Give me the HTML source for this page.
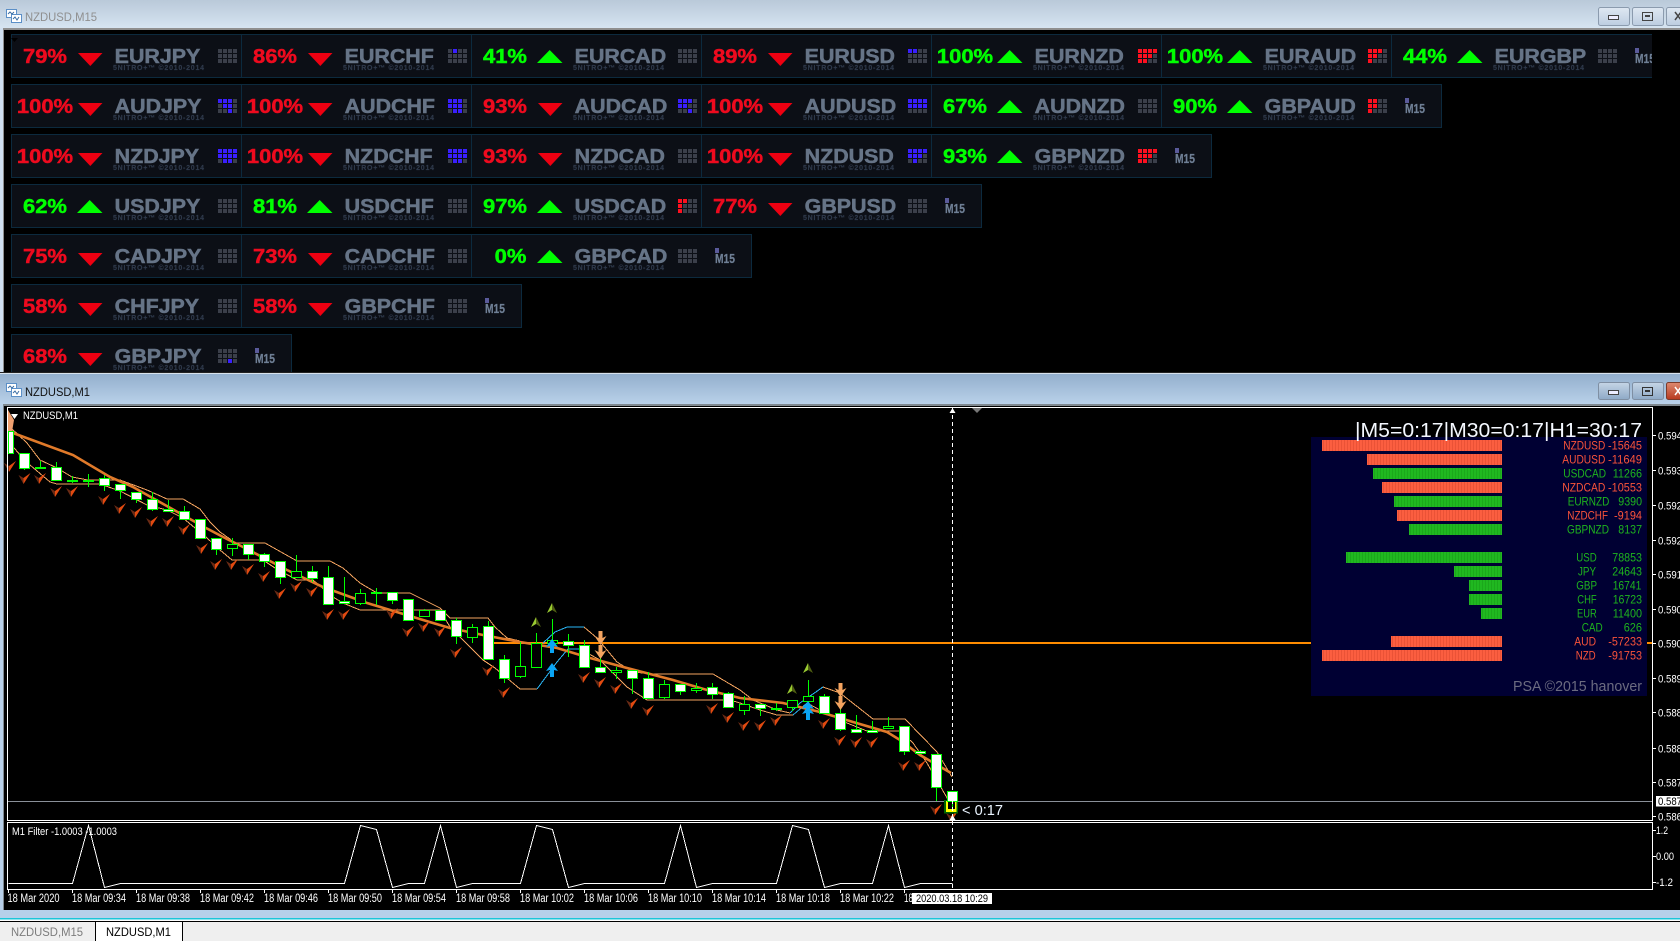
<!DOCTYPE html>
<html><head><meta charset="utf-8"><title>NZDUSD</title>
<style>
html,body{margin:0;padding:0;background:#000;overflow:hidden}
svg{display:block;font-family:"Liberation Sans",sans-serif}
.pc{font-weight:bold;font-size:20px;text-anchor:middle;transform:scale(1.1,1);stroke-width:.45px}
.re{fill:#ee0a1e;stroke:#ee0a1e}.gr{fill:#00ff00;stroke:#00ff00}
.pr{font-weight:bold;font-size:20px;fill:#667487;stroke:#667487;stroke-width:.5px;transform:scale(1.07,1)}
.cp{font-weight:bold;font-size:7px;fill:#2f3a4c;stroke:#2f3a4c;stroke-width:.15px}
.m15{font-weight:bold;font-size:13px;fill:#6f7f95;stroke:#6f7f95;stroke-width:.25px}
.tx{font-size:11.5px;fill:#fff}
.pl{font-size:12px}
.pR{fill:#f9533a}.pG{fill:#1eb41e}
.cr{shape-rendering:crispEdges}
</style></head><body>
<svg width="1680" height="941" viewBox="0 0 1680 941" xmlns="http://www.w3.org/2000/svg">
<defs>
<linearGradient id="t1" x1="0" y1="0" x2="0" y2="1"><stop offset="0" stop-color="#b9c9d9"/><stop offset="1" stop-color="#d6e4f1"/></linearGradient>
<linearGradient id="t2" x1="0" y1="0" x2="0" y2="1"><stop offset="0" stop-color="#93afcd"/><stop offset="1" stop-color="#b9d1e9"/></linearGradient>
<linearGradient id="b1" x1="0" y1="0" x2="0" y2="1"><stop offset="0" stop-color="#dfe8f2"/><stop offset="1" stop-color="#bccde0"/></linearGradient>
<linearGradient id="b2" x1="0" y1="0" x2="0" y2="1"><stop offset="0" stop-color="#c5d5e6"/><stop offset="1" stop-color="#8ea9c6"/></linearGradient>
<linearGradient id="b3" x1="0" y1="0" x2="0" y2="1"><stop offset="0" stop-color="#dd8a70"/><stop offset="1" stop-color="#b83a20"/></linearGradient>
<pattern id="sR" width="3" height="11" patternUnits="userSpaceOnUse"><rect width="3" height="11" fill="#fb5e40"/><rect width="1" height="11" fill="#ea5236"/></pattern>
<pattern id="sG" width="3" height="11" patternUnits="userSpaceOnUse"><rect width="3" height="11" fill="#20b820"/><rect width="1" height="11" fill="#1ba81b"/></pattern>
<polygon id="d" points="67,19 91.5,19 79.3,32" fill="#ee0011"/>
<polygon id="u" points="66,29 91.5,29 78.7,16" fill="#00ff00"/>
<path id="g" class="cr" fill="#3b3f4a" d="M207 15h4v4h-4zM212 15h4v4h-4zM217 15h4v4h-4zM222 15h4v4h-4zM207 20h4v4h-4zM212 20h4v4h-4zM217 20h4v4h-4zM222 20h4v4h-4zM207 25h4v4h-4zM212 25h4v4h-4zM217 25h4v4h-4zM222 25h4v4h-4z"/>
<g id="c"><path d="M-6-4L-1-1V5z" fill="#6a2a14"/><path d="M6-6L-1-1V5z" fill="#e24a10"/></g>
<g id="a"><path d="M0-5L-5 5L0 2z" fill="#9acb32"/><path d="M0-5L5 5L0 2z" fill="#4f5f12"/></g>
<path id="bu" d="M0-7L6 1L2 0V7H-2V0L-6 1z" fill="#0aa5f5"/>
<path id="od" d="M-2-7H2V0L6-2L0 7L-6-2L-2 0z" fill="#f4a460"/>
<g id="ic"><rect x="0.5" y="0.5" width="10" height="8" fill="#fff" stroke="#5b8fc7"/><rect x="5.5" y="5.5" width="10" height="8" fill="#fff" stroke="#5b8fc7"/><path d="M7 10l2-2 2 3 2-3" fill="none" stroke="#3a6ea5"/><path d="M2 5l2-2 2 2 2-2" fill="none" stroke="#3a6ea5"/></g>
</defs>

<!-- window 1 -->
<rect width="1680" height="372" fill="#000"/>
<rect width="1680" height="28" fill="url(#t1)"/>
<rect y="28" width="1680" height="2" fill="#8f8f8f"/>
<rect y="28" width="3" height="344" fill="#d0dff0"/>
<rect x="3" y="28" width="1" height="344" fill="#8f8f8f"/>
<use href="#ic" x="6" y="9"/>
<text x="25" y="21" font-size="12" textLength="72" lengthAdjust="spacingAndGlyphs" fill="#8f8f8f">NZDUSD,M15</text>
<rect x="1598.5" y="7.5" width="31" height="18" rx="2" fill="url(#b1)" stroke="#8b9bae"/>
<rect x="1632.5" y="7.5" width="31" height="18" rx="2" fill="url(#b1)" stroke="#8b9bae"/>
<rect x="1666.5" y="7.5" width="31" height="18" rx="2" fill="url(#b1)" stroke="#8b9bae"/>
<rect x="1608.5" y="15.5" width="10" height="4" fill="#eef" stroke="#444"/>
<rect x="1642.5" y="12.5" width="10" height="8" fill="none" stroke="#444"/><rect x="1645" y="15" width="5" height="2" fill="#444"/>
<path d="M1675 12l6 8M1681 12l-6 8" stroke="#444" stroke-width="1.5"/>

<!-- tile row backgrounds -->
<g fill="#0c0f16" stroke="#0c2a3e" class="cr">
<rect x="11.5" y="34.5" width="1660" height="43"/>
<rect x="11.5" y="84.5" width="1430" height="43"/>
<rect x="11.5" y="134.5" width="1200" height="43"/>
<rect x="11.5" y="184.5" width="970" height="43"/>
<rect x="11.5" y="234.5" width="740" height="43"/>
<rect x="11.5" y="284.5" width="510" height="43"/>
<rect x="11.5" y="334.5" width="280" height="43"/>
</g>
<path class="cr" stroke="#0c2a3e" fill="none" d="M241.5 34v44M471.5 34v44M701.5 34v44M931.5 34v44M1161.5 34v44M1391.5 34v44M241.5 84v44M471.5 84v44M701.5 84v44M931.5 84v44M1161.5 84v44M241.5 134v44M471.5 134v44M701.5 134v44M931.5 134v44M241.5 184v44M471.5 184v44M701.5 184v44M241.5 234v44M471.5 234v44M241.5 284v44"/>
<path d="M11 38h7l-3.5 4z" fill="#000"/>

<!-- row 1 -->
<g transform="translate(11 34)"><text class="pc re" x="30.9" y="29">79%</text><use href="#d"/><text class="pr" x="96.9" y="29">EURJPY</text><text class="cp" x="102" y="36" textLength="91">5NITRO+™ ©2010-2014</text><use href="#g"/></g>
<g transform="translate(241 34)"><text class="pc re" x="30.9" y="29">86%</text><use href="#d"/><text class="pr" x="96.9" y="29">EURCHF</text><text class="cp" x="102" y="36" textLength="91">5NITRO+™ ©2010-2014</text><use href="#g"/><path fill="#3a1fff" class="cr" d="M212 15h4v4h-4z"/></g>
<g transform="translate(471 34)"><text class="pc gr" x="30.9" y="29">41%</text><use href="#u"/><text class="pr" x="96.9" y="29">EURCAD</text><text class="cp" x="102" y="36" textLength="91">5NITRO+™ ©2010-2014</text><use href="#g"/></g>
<g transform="translate(701 34)"><text class="pc re" x="30.9" y="29">89%</text><use href="#d"/><text class="pr" x="96.9" y="29">EURUSD</text><text class="cp" x="102" y="36" textLength="91">5NITRO+™ ©2010-2014</text><use href="#g"/><path fill="#3a1fff" class="cr" d="M207 15h4v4h-4zM212 15h4v4h-4z"/></g>
<g transform="translate(931 34)"><text class="pc gr" x="30.9" y="29">100%</text><use href="#u"/><text class="pr" x="96.9" y="29">EURNZD</text><text class="cp" x="102" y="36" textLength="91">5NITRO+™ ©2010-2014</text><use href="#g"/><path fill="#ff1020" class="cr" d="M207 15h4v4h-4zM212 15h4v4h-4zM217 15h4v4h-4zM222 15h4v4h-4zM207 20h4v4h-4zM212 20h4v4h-4zM217 20h4v4h-4zM207 25h4v4h-4zM212 25h4v4h-4z"/></g>
<g transform="translate(1161 34)"><text class="pc gr" x="30.9" y="29">100%</text><use href="#u"/><text class="pr" x="96.9" y="29">EURAUD</text><text class="cp" x="102" y="36" textLength="91">5NITRO+™ ©2010-2014</text><use href="#g"/><path fill="#ff1020" class="cr" d="M207 15h4v4h-4zM212 15h4v4h-4zM217 15h4v4h-4zM207 20h4v4h-4zM212 20h4v4h-4zM207 25h4v4h-4z"/></g>
<g transform="translate(1391 34)"><text class="pc gr" x="30.9" y="29">44%</text><use href="#u"/><text class="pr" x="96.9" y="29">EURGBP</text><text class="cp" x="102" y="36" textLength="91">5NITRO+™ ©2010-2014</text><use href="#g"/></g>
<g transform="translate(1635 34)"><rect width="4" height="5" y="14" fill="#5a5a9a"/><text class="m15" y="29" textLength="20" lengthAdjust="spacingAndGlyphs">M15</text></g>
<rect x="1652" y="30" width="28" height="50" fill="#000"/>

<!-- row 2 -->
<g transform="translate(11 84)"><text class="pc re" x="30.9" y="29">100%</text><use href="#d"/><text class="pr" x="96.9" y="29">AUDJPY</text><text class="cp" x="102" y="36" textLength="91">5NITRO+™ ©2010-2014</text><use href="#g"/><path fill="#3a1fff" class="cr" d="M207 15h4v4h-4zM212 15h4v4h-4zM217 15h4v4h-4zM212 20h4v4h-4zM217 20h4v4h-4zM217 25h4v4h-4z"/></g>
<g transform="translate(241 84)"><text class="pc re" x="30.9" y="29">100%</text><use href="#d"/><text class="pr" x="96.9" y="29">AUDCHF</text><text class="cp" x="102" y="36" textLength="91">5NITRO+™ ©2010-2014</text><use href="#g"/><path fill="#3a1fff" class="cr" d="M207 15h4v4h-4zM212 15h4v4h-4zM217 15h4v4h-4zM207 20h4v4h-4zM212 20h4v4h-4zM217 20h4v4h-4zM212 25h4v4h-4zM217 25h4v4h-4z"/></g>
<g transform="translate(471 84)"><text class="pc re" x="30.9" y="29">93%</text><use href="#d"/><text class="pr" x="96.9" y="29">AUDCAD</text><text class="cp" x="102" y="36" textLength="91">5NITRO+™ ©2010-2014</text><use href="#g"/><path fill="#3a1fff" class="cr" d="M207 15h4v4h-4zM212 15h4v4h-4zM217 15h4v4h-4zM207 20h4v4h-4zM212 20h4v4h-4zM217 25h4v4h-4z"/></g>
<g transform="translate(701 84)"><text class="pc re" x="30.9" y="29">100%</text><use href="#d"/><text class="pr" x="96.9" y="29">AUDUSD</text><text class="cp" x="102" y="36" textLength="91">5NITRO+™ ©2010-2014</text><use href="#g"/><path fill="#3a1fff" class="cr" d="M207 15h4v4h-4zM212 15h4v4h-4zM217 15h4v4h-4zM222 15h4v4h-4zM207 20h4v4h-4zM212 20h4v4h-4zM217 20h4v4h-4zM222 20h4v4h-4z"/></g>
<g transform="translate(931 84)"><text class="pc gr" x="30.9" y="29">67%</text><use href="#u"/><text class="pr" x="96.9" y="29">AUDNZD</text><text class="cp" x="102" y="36" textLength="91">5NITRO+™ ©2010-2014</text><use href="#g"/></g>
<g transform="translate(1161 84)"><text class="pc gr" x="30.9" y="29">90%</text><use href="#u"/><text class="pr" x="96.9" y="29">GBPAUD</text><text class="cp" x="102" y="36" textLength="91">5NITRO+™ ©2010-2014</text><use href="#g"/><path fill="#ff1020" class="cr" d="M207 15h4v4h-4zM212 15h4v4h-4zM207 20h4v4h-4zM212 20h4v4h-4zM207 25h4v4h-4z"/></g>
<g transform="translate(1405 84)"><rect width="4" height="5" y="14" fill="#5a5a9a"/><text class="m15" y="29" textLength="20" lengthAdjust="spacingAndGlyphs">M15</text></g>

<!-- row 3 -->
<g transform="translate(11 134)"><text class="pc re" x="30.9" y="29">100%</text><use href="#d"/><text class="pr" x="96.9" y="29">NZDJPY</text><text class="cp" x="102" y="36" textLength="91">5NITRO+™ ©2010-2014</text><use href="#g"/><path fill="#3a1fff" class="cr" d="M207 15h4v4h-4zM212 15h4v4h-4zM217 15h4v4h-4zM222 15h4v4h-4zM207 20h4v4h-4zM212 20h4v4h-4zM217 20h4v4h-4zM222 20h4v4h-4zM212 25h4v4h-4zM217 25h4v4h-4z"/></g>
<g transform="translate(241 134)"><text class="pc re" x="30.9" y="29">100%</text><use href="#d"/><text class="pr" x="96.9" y="29">NZDCHF</text><text class="cp" x="102" y="36" textLength="91">5NITRO+™ ©2010-2014</text><use href="#g"/><path fill="#3a1fff" class="cr" d="M207 15h4v4h-4zM212 15h4v4h-4zM217 15h4v4h-4zM222 15h4v4h-4zM207 20h4v4h-4zM212 20h4v4h-4zM217 20h4v4h-4zM222 20h4v4h-4zM212 25h4v4h-4zM217 25h4v4h-4z"/></g>
<g transform="translate(471 134)"><text class="pc re" x="30.9" y="29">93%</text><use href="#d"/><text class="pr" x="96.9" y="29">NZDCAD</text><text class="cp" x="102" y="36" textLength="91">5NITRO+™ ©2010-2014</text><use href="#g"/></g>
<g transform="translate(701 134)"><text class="pc re" x="30.9" y="29">100%</text><use href="#d"/><text class="pr" x="96.9" y="29">NZDUSD</text><text class="cp" x="102" y="36" textLength="91">5NITRO+™ ©2010-2014</text><use href="#g"/><path fill="#3a1fff" class="cr" d="M207 15h4v4h-4zM212 15h4v4h-4zM217 15h4v4h-4zM222 15h4v4h-4zM207 20h4v4h-4zM212 20h4v4h-4zM217 20h4v4h-4zM212 25h4v4h-4z"/></g>
<g transform="translate(931 134)"><text class="pc gr" x="30.9" y="29">93%</text><use href="#u"/><text class="pr" x="96.9" y="29">GBPNZD</text><text class="cp" x="102" y="36" textLength="91">5NITRO+™ ©2010-2014</text><use href="#g"/><path fill="#ff1020" class="cr" d="M207 15h4v4h-4zM212 15h4v4h-4zM217 15h4v4h-4zM222 15h4v4h-4zM207 20h4v4h-4zM212 20h4v4h-4zM217 20h4v4h-4zM207 25h4v4h-4zM212 25h4v4h-4z"/></g>
<g transform="translate(1175 134)"><rect width="4" height="5" y="14" fill="#5a5a9a"/><text class="m15" y="29" textLength="20" lengthAdjust="spacingAndGlyphs">M15</text></g>

<!-- row 4 -->
<g transform="translate(11 184)"><text class="pc gr" x="30.9" y="29">62%</text><use href="#u"/><text class="pr" x="96.9" y="29">USDJPY</text><text class="cp" x="102" y="36" textLength="91">5NITRO+™ ©2010-2014</text><use href="#g"/></g>
<g transform="translate(241 184)"><text class="pc gr" x="30.9" y="29">81%</text><use href="#u"/><text class="pr" x="96.9" y="29">USDCHF</text><text class="cp" x="102" y="36" textLength="91">5NITRO+™ ©2010-2014</text><use href="#g"/></g>
<g transform="translate(471 184)"><text class="pc gr" x="30.9" y="29">97%</text><use href="#u"/><text class="pr" x="96.9" y="29">USDCAD</text><text class="cp" x="102" y="36" textLength="91">5NITRO+™ ©2010-2014</text><use href="#g"/><path fill="#ff1020" class="cr" d="M207 15h4v4h-4zM212 15h4v4h-4zM207 20h4v4h-4zM207 25h4v4h-4z"/></g>
<g transform="translate(701 184)"><text class="pc re" x="30.9" y="29">77%</text><use href="#d"/><text class="pr" x="96.9" y="29">GBPUSD</text><text class="cp" x="102" y="36" textLength="91">5NITRO+™ ©2010-2014</text><use href="#g"/></g>
<g transform="translate(945 184)"><rect width="4" height="5" y="14" fill="#5a5a9a"/><text class="m15" y="29" textLength="20" lengthAdjust="spacingAndGlyphs">M15</text></g>

<!-- row 5 -->
<g transform="translate(11 234)"><text class="pc re" x="30.9" y="29">75%</text><use href="#d"/><text class="pr" x="96.9" y="29">CADJPY</text><text class="cp" x="102" y="36" textLength="91">5NITRO+™ ©2010-2014</text><use href="#g"/></g>
<g transform="translate(241 234)"><text class="pc re" x="30.9" y="29">73%</text><use href="#d"/><text class="pr" x="96.9" y="29">CADCHF</text><text class="cp" x="102" y="36" textLength="91">5NITRO+™ ©2010-2014</text><use href="#g"/></g>
<g transform="translate(471 234)"><text class="pc gr" x="35.9" y="29">0%</text><use href="#u"/><text class="pr" x="96.9" y="29">GBPCAD</text><text class="cp" x="102" y="36" textLength="91">5NITRO+™ ©2010-2014</text><use href="#g"/></g>
<g transform="translate(715 234)"><rect width="4" height="5" y="14" fill="#5a5a9a"/><text class="m15" y="29" textLength="20" lengthAdjust="spacingAndGlyphs">M15</text></g>

<!-- row 6 -->
<g transform="translate(11 284)"><text class="pc re" x="30.9" y="29">58%</text><use href="#d"/><text class="pr" x="96.9" y="29">CHFJPY</text><text class="cp" x="102" y="36" textLength="91">5NITRO+™ ©2010-2014</text><use href="#g"/></g>
<g transform="translate(241 284)"><text class="pc re" x="30.9" y="29">58%</text><use href="#d"/><text class="pr" x="96.9" y="29">GBPCHF</text><text class="cp" x="102" y="36" textLength="91">5NITRO+™ ©2010-2014</text><use href="#g"/></g>
<g transform="translate(485 284)"><rect width="4" height="5" y="14" fill="#5a5a9a"/><text class="m15" y="29" textLength="20" lengthAdjust="spacingAndGlyphs">M15</text></g>

<!-- row 7 -->
<g transform="translate(11 334)"><text class="pc re" x="30.9" y="29">68%</text><use href="#d"/><text class="pr" x="96.9" y="29">GBPJPY</text><text class="cp" x="102" y="36" textLength="91">5NITRO+™ ©2010-2014</text><use href="#g"/><path fill="#3a1fff" class="cr" d="M217 25h4v4h-4z"/></g>
<g transform="translate(255 334)"><rect width="4" height="5" y="14" fill="#5a5a9a"/><text class="m15" y="29" textLength="20" lengthAdjust="spacingAndGlyphs">M15</text></g>

<!-- window 2 -->
<rect y="372" width="1680" height="569" fill="#000"/>
<rect y="372" width="1680" height="1" fill="#222"/>
<rect y="373" width="1680" height="1" fill="#d8e2ec"/>
<rect y="374" width="1680" height="30" fill="url(#t2)"/>
<rect y="404" width="1680" height="2" fill="#7f888f"/>
<rect y="404" width="3" height="506" fill="#b7cfe8"/>
<rect x="3" y="404" width="1" height="506" fill="#7f888f"/>
<use href="#ic" x="6" y="383"/>
<text x="25" y="396" font-size="12" textLength="65" lengthAdjust="spacingAndGlyphs" fill="#111">NZDUSD,M1</text>
<rect x="1598.5" y="382.5" width="31" height="17" rx="2" fill="url(#b2)" stroke="#7f8fa3"/>
<rect x="1632.5" y="382.5" width="31" height="17" rx="2" fill="url(#b2)" stroke="#7f8fa3"/>
<rect x="1666.5" y="382.5" width="31" height="17" rx="2" fill="url(#b3)" stroke="#7a3a2a"/>
<rect x="1608.5" y="390.5" width="10" height="4" fill="#eef" stroke="#444"/>
<rect x="1642.5" y="387.5" width="10" height="8" fill="none" stroke="#333"/><rect x="1645" y="390" width="5" height="2" fill="#333"/>
<path d="M1675 387l6 8M1681 387l-6 8" stroke="#fff" stroke-width="1.5"/>

<!-- horizontals behind chart -->
<rect x="488" y="642" width="1164" height="2" fill="#ff8c00" class="cr"/>
<rect x="8" y="801" width="1644" height="1" fill="#8a9099" class="cr"/>

<!-- band lines -->
<g fill="none" class="cr">
<polyline stroke="#f4a460" points="8,418 10,427 27,443 40,460 57,468 72,477 88,480 120,480 147,490 167,499 183,499 200,509 210,522 220,532 230,539 233,543 265,543 297,561 330,561 343,568 360,583 377,593 410,593 440,608 450,618 488,618 495,627 507,638 520,641"/>
<polyline stroke="#f4a460" points="10,443 20,455 30,465 50,482 57,484 100,484 120,491 147,505 167,510 183,518 207,538 220,550 232,560 263,560 275,568 297,580 313,580 333,597 343,603 360,610 397,610 440,610 450,627 483,660 495,668 520,689 537,689"/>
<polyline stroke="#29b6f6" points="537,689 557,662 568,649 580,649"/>
<polyline stroke="#29b6f6" points="543,643 555,632 567,627 584,627"/>
<polyline stroke="#f4a460" points="584,627 597,638 617,662 633,672 653,674 713,674 740,690 753,700 777,710 790,713"/>
<polyline stroke="#f4a460" points="580,649 600,660 627,687 647,700 730,700 740,703 760,710 777,715 793,715"/>
<polyline stroke="#29b6f6" points="790,713 800,703 823,687"/>
<polyline stroke="#29b6f6" points="793,715 807,703"/>
<polyline stroke="#f4a460" points="823,687 840,693 873,719 905,719 937,752 952,777"/>
<polyline stroke="#f4a460" points="807,703 820,710 847,723 867,731 900,731 913,743 927,763 950,803"/>
</g>
<polyline fill="none" stroke="#e07a2a" stroke-width="2.6" points="9,428 13,433 73,455 110,477 133,487 206,528 227,539 243,547 287,570 323,587 367,603 400,613 433,623 450,628 483,635 520,642 557,648 590,658 627,668 673,680 707,690 740,698 783,703 820,712 853,722 887,732 900,740 920,755 951,773"/>
<path d="M8 410L14 420L12 432H8z" fill="#f0a070"/>

<!-- chevrons -->
<g>
<use href="#c" x="10" y="467"/><use href="#c" x="24.5" y="479"/><use href="#c" x="40" y="479"/><use href="#c" x="56" y="492"/><use href="#c" x="72" y="492"/><use href="#c" x="104" y="500"/><use href="#c" x="120" y="509"/><use href="#c" x="136" y="513"/><use href="#c" x="152" y="522"/><use href="#c" x="168" y="522"/><use href="#c" x="184" y="530"/><use href="#c" x="202" y="549"/><use href="#c" x="216" y="565"/><use href="#c" x="232" y="565"/><use href="#c" x="248" y="570"/><use href="#c" x="264" y="577"/><use href="#c" x="280" y="594"/><use href="#c" x="296" y="587"/><use href="#c" x="312" y="592"/><use href="#c" x="328" y="615"/><use href="#c" x="344" y="615"/><use href="#c" x="392" y="614"/><use href="#c" x="408" y="632"/><use href="#c" x="424" y="627"/><use href="#c" x="440" y="632"/><use href="#c" x="456" y="653"/><use href="#c" x="488" y="671"/><use href="#c" x="504" y="693"/><use href="#c" x="584" y="678"/><use href="#c" x="600" y="683"/><use href="#c" x="616" y="689"/><use href="#c" x="632" y="704"/><use href="#c" x="648" y="711"/><use href="#c" x="712" y="709"/><use href="#c" x="728" y="718"/><use href="#c" x="744" y="726"/><use href="#c" x="760" y="726"/><use href="#c" x="776" y="721"/><use href="#c" x="824" y="724"/><use href="#c" x="840" y="741"/><use href="#c" x="856" y="743"/><use href="#c" x="872" y="743"/><use href="#c" x="904" y="766"/><use href="#c" x="920" y="766"/><use href="#c" x="936" y="810"/><use href="#c" x="952" y="817"/>
</g>

<!-- candles -->
<g class="cr" stroke="#00ff00" fill="none">
<path d="M24.5 453V470M40.5 461V469M56.5 462V468M72.5 476V483M88.5 474V487M104.5 475V491M120.5 484V499M136.5 492V503M152.5 492V511M168.5 500V512M184.5 506V520M216.5 549V555M232.5 538V556M248.5 554V560M264.5 553V567M280.5 577V584M296.5 555V578M312.5 566V582M328.5 566V578M344.5 577V602M360.5 589V605M376.5 588V605M392.5 600V604M424.5 609V611M456.5 618V644M472.5 624V643M488.5 621V627M504.5 655V683M520.5 642V678M536.5 633V644M552.5 619V647M568.5 634V657M584.5 640V646M600.5 653V668M616.5 667V679M632.5 678V694M648.5 672V679M664.5 680V699M680.5 691V695M696.5 683V693M712.5 683V699M728.5 692V694M744.5 696V715M760.5 708V716M776.5 703V711M792.5 707V711M808.5 680V703M824.5 694V697M840.5 708V731M856.5 715V730M872.5 721V731M888.5 717V727M904.5 751V755M920.5 750V752M936.5 787V801"/>
<path fill="#000" d="M227.5 544.5h10V548.5h-10zM291.5 571.5h10V577.5h-10zM355.5 593.5h10V603.5h-10zM419.5 610.5h10V616.5h-10zM467.5 627.5h10V637.5h-10zM515.5 666.5h10V676.5h-10zM531.5 643.5h10V667.5h-10zM547.5 640.5h10V643.5h-10zM611.5 670.5h10V672.5h-10zM659.5 684.5h10V697.5h-10zM691.5 688.5h10V690.5h-10zM739.5 704.5h10V710.5h-10zM787.5 700.5h10V707.5h-10zM803.5 696.5h10V701.5h-10zM883.5 726.5h10V728.5h-10z"/>
<path fill="#fff" d="M8.5 431.5h5V453.5h-5zM19.5 453.5h10V468.5h-10zM35.5 467.5h10V468.5h-10zM51.5 467.5h10V480.5h-10zM67.5 480.5h10V481.5h-10zM83.5 480.5h10V481.5h-10zM99.5 478.5h10V485.5h-10zM115.5 484.5h10V490.5h-10zM131.5 492.5h10V499.5h-10zM147.5 499.5h10V509.5h-10zM163.5 509.5h10V511.5h-10zM179.5 511.5h10V519.5h-10zM195.5 519.5h10V538.5h-10zM211.5 538.5h10V549.5h-10zM243.5 544.5h10V554.5h-10zM259.5 554.5h10V561.5h-10zM275.5 561.5h10V577.5h-10zM307.5 571.5h10V578.5h-10zM323.5 577.5h10V604.5h-10zM339.5 601.5h10V603.5h-10zM371.5 592.5h10V593.5h-10zM387.5 592.5h10V600.5h-10zM403.5 599.5h10V620.5h-10zM435.5 610.5h10V620.5h-10zM451.5 620.5h10V636.5h-10zM483.5 626.5h10V659.5h-10zM499.5 659.5h10V678.5h-10zM563.5 641.5h10V645.5h-10zM579.5 645.5h10V667.5h-10zM595.5 667.5h10V672.5h-10zM627.5 670.5h10V678.5h-10zM643.5 678.5h10V698.5h-10zM675.5 684.5h10V691.5h-10zM707.5 687.5h10V694.5h-10zM723.5 693.5h10V707.5h-10zM755.5 704.5h10V708.5h-10zM771.5 708.5h10V709.5h-10zM819.5 696.5h10V713.5h-10zM835.5 713.5h10V729.5h-10zM851.5 729.5h10V732.5h-10zM867.5 730.5h10V732.5h-10zM899.5 726.5h10V751.5h-10zM915.5 751.5h10V753.5h-10zM931.5 754.5h10V787.5h-10z"/>
</g>
<!-- last candle with marker -->
<rect class="cr" x="944" y="800" width="14" height="13.5" fill="#006400"/>
<rect class="cr" x="946" y="801" width="10.5" height="11" fill="#ffff00"/>
<rect class="cr" x="948" y="802" width="7" height="7" fill="#000"/>
<rect class="cr" x="947.5" y="791.5" width="10" height="10" fill="#fff" stroke="#00ff00"/>
<path class="cr" d="M952.5 802V807" stroke="#00ff00"/>

<!-- arrows -->
<use href="#a" x="552" y="608"/><use href="#a" x="536" y="622"/><use href="#a" x="808" y="668"/><use href="#a" x="792" y="689"/>
<use href="#bu" x="552" y="646"/><use href="#bu" x="552" y="670"/><use href="#bu" x="808" y="708"/><use href="#bu" x="808" y="713"/>
<use href="#od" x="600.5" y="638"/><use href="#od" x="600.5" y="652"/><use href="#od" x="840.5" y="690"/><use href="#od" x="840.5" y="703"/>

<!-- panel -->
<rect x="1311" y="437" width="336" height="259" fill="#000033" class="cr"/>
<rect x="1647" y="642" width="5" height="2" fill="#ff8c00" class="cr"/>
<g class="cr">
<rect x="1322" y="440" width="180" height="11" fill="url(#sR)"/>
<rect x="1367" y="454" width="135" height="11" fill="url(#sR)"/>
<rect x="1373" y="468" width="129" height="11" fill="url(#sG)"/>
<rect x="1382" y="482" width="120" height="11" fill="url(#sR)"/>
<rect x="1394" y="496" width="108" height="11" fill="url(#sG)"/>
<rect x="1397" y="510" width="105" height="11" fill="url(#sR)"/>
<rect x="1409" y="524" width="93" height="11" fill="url(#sG)"/>
<rect x="1346" y="552" width="156" height="11" fill="url(#sG)"/>
<rect x="1454" y="566" width="48" height="11" fill="url(#sG)"/>
<rect x="1469" y="580" width="33" height="11" fill="url(#sG)"/>
<rect x="1469" y="594" width="33" height="11" fill="url(#sG)"/>
<rect x="1481" y="608" width="21" height="11" fill="url(#sG)"/>
<rect x="1391" y="636" width="111" height="11" fill="url(#sR)"/>
<rect x="1322" y="650" width="180" height="11" fill="url(#sR)"/>
</g>
<g class="pl">
<text class="pR" x="1563.3" y="449.5" textLength="42" lengthAdjust="spacingAndGlyphs">NZDUSD</text><text class="pR" x="1608" y="449.5" textLength="34" lengthAdjust="spacingAndGlyphs">-15645</text>
<text class="pR" x="1562.3" y="463.5" textLength="43" lengthAdjust="spacingAndGlyphs">AUDUSD</text><text class="pR" x="1608" y="463.5" textLength="34" lengthAdjust="spacingAndGlyphs">-11649</text>
<text class="pG" x="1563.3" y="477.5" textLength="42.7" lengthAdjust="spacingAndGlyphs">USDCAD</text><text class="pG" x="1612.7" y="477.5" textLength="29.3" lengthAdjust="spacingAndGlyphs">11266</text>
<text class="pR" x="1562.3" y="491.5" textLength="43" lengthAdjust="spacingAndGlyphs">NZDCAD</text><text class="pR" x="1608" y="491.5" textLength="34" lengthAdjust="spacingAndGlyphs">-10553</text>
<text class="pG" x="1567.7" y="505.5" textLength="41.6" lengthAdjust="spacingAndGlyphs">EURNZD</text><text class="pG" x="1618.3" y="505.5" textLength="23.7" lengthAdjust="spacingAndGlyphs">9390</text>
<text class="pR" x="1567.3" y="519.5" textLength="40.7" lengthAdjust="spacingAndGlyphs">NZDCHF</text><text class="pR" x="1614" y="519.5" textLength="28" lengthAdjust="spacingAndGlyphs">-9194</text>
<text class="pG" x="1567" y="533.5" textLength="42" lengthAdjust="spacingAndGlyphs">GBPNZD</text><text class="pG" x="1618.3" y="533.5" textLength="23.7" lengthAdjust="spacingAndGlyphs">8137</text>
<text class="pG" x="1576.3" y="561.5" textLength="20.4" lengthAdjust="spacingAndGlyphs">USD</text><text class="pG" x="1612.3" y="561.5" textLength="29.7" lengthAdjust="spacingAndGlyphs">78853</text>
<text class="pG" x="1578" y="575.5" textLength="18" lengthAdjust="spacingAndGlyphs">JPY</text><text class="pG" x="1612.3" y="575.5" textLength="29.7" lengthAdjust="spacingAndGlyphs">24643</text>
<text class="pG" x="1576.3" y="589.5" textLength="20.7" lengthAdjust="spacingAndGlyphs">GBP</text><text class="pG" x="1612.7" y="589.5" textLength="28.6" lengthAdjust="spacingAndGlyphs">16741</text>
<text class="pG" x="1577.3" y="603.5" textLength="19.4" lengthAdjust="spacingAndGlyphs">CHF</text><text class="pG" x="1612.7" y="603.5" textLength="29.3" lengthAdjust="spacingAndGlyphs">16723</text>
<text class="pG" x="1577" y="617.5" textLength="19.7" lengthAdjust="spacingAndGlyphs">EUR</text><text class="pG" x="1612.7" y="617.5" textLength="29.3" lengthAdjust="spacingAndGlyphs">11400</text>
<text class="pG" x="1581.7" y="631.5" textLength="21" lengthAdjust="spacingAndGlyphs">CAD</text><text class="pG" x="1623.7" y="631.5" textLength="18.3" lengthAdjust="spacingAndGlyphs">626</text>
<text class="pR" x="1574.3" y="645.5" textLength="21.7" lengthAdjust="spacingAndGlyphs">AUD</text><text class="pR" x="1608.3" y="645.5" textLength="33.7" lengthAdjust="spacingAndGlyphs">-57233</text>
<text class="pR" x="1575.7" y="659.5" textLength="20" lengthAdjust="spacingAndGlyphs">NZD</text><text class="pR" x="1608.3" y="659.5" textLength="33.7" lengthAdjust="spacingAndGlyphs">-91753</text>
</g>
<text x="1513" y="691" font-size="15" fill="#6b6b80" textLength="129" lengthAdjust="spacingAndGlyphs">PSA ©2015 hanover</text>
<text x="1355" y="437" font-size="20" fill="#f4f8ff" textLength="287" lengthAdjust="spacingAndGlyphs">|M5=0:17|M30=0:17|H1=30:17</text>

<!-- frames -->
<g fill="none" stroke="#fff" class="cr">
<rect x="7.5" y="407.5" width="1645" height="413"/>
<rect x="7.5" y="822.5" width="1645" height="67"/>
</g>
<text class="tx" x="23" y="419" textLength="55" lengthAdjust="spacingAndGlyphs" style="font-size:11px">NZDUSD,M1</text>
<path d="M11 414h7l-3.5 5z" fill="#fff"/>
<path d="M972 408h10l-5 5z" fill="#777"/>

<!-- crosshair -->
<path d="M952.5 408V889" stroke="#fff" stroke-dasharray="4 3" class="cr"/>
<path d="M952.5 408l3 5h-6zM952.5 815l3 5h-6z" fill="#fff"/>
<text x="962" y="815" font-size="15" fill="#eaf4ff" textLength="41" lengthAdjust="spacingAndGlyphs">&lt; 0:17</text>

<!-- sub-window -->
<text x="12" y="835" style="font-size:11px" class="tx" textLength="105" lengthAdjust="spacingAndGlyphs">M1 Filter -1.0003 -1.0003</text>
<polyline class="cr" fill="none" stroke="#fff" points="8.5,883.5 72.5,883.5 88.5,825.5 104.5,887.5 120.5,883.5 344.5,883.5 360.5,825.5 376.5,829.5 392.5,887.5 408.5,883.5 424.5,883.5 440.5,825.5 456.5,887.5 472.5,883.5 520.5,883.5 536.5,825.5 552.5,829.5 568.5,887.5 584.5,883.5 664.5,883.5 680.5,825.5 696.5,887.5 712.5,883.5 776.5,883.5 792.5,825.5 808.5,829.5 824.5,887.5 840.5,883.5 872.5,883.5 888.5,825.5 904.5,887.5 920.5,883.5 952.5,883.5"/>

<!-- price axis -->
<path class="cr" stroke="#fff" d="M1653 435.5h3M1653 470.5h3M1653 505.5h3M1653 540.5h3M1653 574.5h3M1653 609.5h3M1653 643.5h3M1653 678.5h3M1653 712.5h3M1653 748.5h3M1653 782.5h3M1653 816.5h3M1653 830.5h3M1653 856.5h3M1653 882.5h3"/>
<g class="tx" style="font-size:11px">
<text x="1658" y="439.5" textLength="24" lengthAdjust="spacingAndGlyphs">0.594</text>
<text x="1658" y="474.5" textLength="24" lengthAdjust="spacingAndGlyphs">0.593</text>
<text x="1658" y="509.5" textLength="24" lengthAdjust="spacingAndGlyphs">0.592</text>
<text x="1658" y="544.5" textLength="24" lengthAdjust="spacingAndGlyphs">0.592</text>
<text x="1658" y="578.5" textLength="24" lengthAdjust="spacingAndGlyphs">0.591</text>
<text x="1658" y="613.5" textLength="24" lengthAdjust="spacingAndGlyphs">0.590</text>
<text x="1658" y="647.5" textLength="24" lengthAdjust="spacingAndGlyphs">0.590</text>
<text x="1658" y="682.5" textLength="24" lengthAdjust="spacingAndGlyphs">0.589</text>
<text x="1658" y="716.5" textLength="24" lengthAdjust="spacingAndGlyphs">0.588</text>
<text x="1658" y="752.5" textLength="24" lengthAdjust="spacingAndGlyphs">0.588</text>
<text x="1658" y="786.5" textLength="24" lengthAdjust="spacingAndGlyphs">0.587</text>
<text x="1658" y="820.5" textLength="24" lengthAdjust="spacingAndGlyphs">0.586</text>
<text x="1656" y="834" textLength="12" lengthAdjust="spacingAndGlyphs">1.2</text>
<text x="1656" y="860" textLength="18" lengthAdjust="spacingAndGlyphs">0.00</text>
<text x="1656" y="886" textLength="17" lengthAdjust="spacingAndGlyphs">-1.2</text>
</g>
<rect x="1656" y="796" width="24" height="10.5" fill="#fff" class="cr"/>
<text x="1658" y="805" style="font-size:11px" fill="#000" textLength="24" lengthAdjust="spacingAndGlyphs">0.587</text>

<!-- time axis -->
<path class="cr" stroke="#fff" d="M8.5 889v4M72.5 889v4M136.5 889v4M200.5 889v4M264.5 889v4M328.5 889v4M392.5 889v4M456.5 889v4M520.5 889v4M584.5 889v4M648.5 889v4M712.5 889v4M776.5 889v4M840.5 889v4M904.5 889v4"/>
<g class="tx">
<text x="7.5" y="902" textLength="52" lengthAdjust="spacingAndGlyphs">18 Mar 2020</text>
<text x="72" y="902" textLength="54" lengthAdjust="spacingAndGlyphs">18 Mar 09:34</text>
<text x="136" y="902" textLength="54" lengthAdjust="spacingAndGlyphs">18 Mar 09:38</text>
<text x="200" y="902" textLength="54" lengthAdjust="spacingAndGlyphs">18 Mar 09:42</text>
<text x="264" y="902" textLength="54" lengthAdjust="spacingAndGlyphs">18 Mar 09:46</text>
<text x="328" y="902" textLength="54" lengthAdjust="spacingAndGlyphs">18 Mar 09:50</text>
<text x="392" y="902" textLength="54" lengthAdjust="spacingAndGlyphs">18 Mar 09:54</text>
<text x="456" y="902" textLength="54" lengthAdjust="spacingAndGlyphs">18 Mar 09:58</text>
<text x="520" y="902" textLength="54" lengthAdjust="spacingAndGlyphs">18 Mar 10:02</text>
<text x="584" y="902" textLength="54" lengthAdjust="spacingAndGlyphs">18 Mar 10:06</text>
<text x="648" y="902" textLength="54" lengthAdjust="spacingAndGlyphs">18 Mar 10:10</text>
<text x="712" y="902" textLength="54" lengthAdjust="spacingAndGlyphs">18 Mar 10:14</text>
<text x="776" y="902" textLength="54" lengthAdjust="spacingAndGlyphs">18 Mar 10:18</text>
<text x="840" y="902" textLength="54" lengthAdjust="spacingAndGlyphs">18 Mar 10:22</text>
<text x="904" y="902" textLength="9" lengthAdjust="spacingAndGlyphs">18</text>
</g>
<rect x="912" y="893" width="80" height="11" fill="#fff" class="cr"/>
<text x="916" y="902" style="font-size:11px" fill="#000" textLength="72" lengthAdjust="spacingAndGlyphs">2020.03.18 10:29</text>

<!-- bottom chrome -->
<rect y="910" width="1680" height="8" fill="#b6d0ea"/>
<rect y="918" width="1680" height="1.5" fill="#1bc5d8"/>
<rect y="919.5" width="1680" height="2" fill="#fff"/>
<rect y="921" width="1680" height="1" fill="#000"/>
<rect y="922" width="1680" height="19" fill="#efefef"/>
<rect x="95.5" y="921.5" width="87" height="20" fill="#fff" stroke="#000"/>
<text x="11" y="936" font-size="12" fill="#7d7d7d" textLength="72" lengthAdjust="spacingAndGlyphs">NZDUSD,M15</text>
<text x="106" y="936" font-size="12" fill="#000" textLength="65" lengthAdjust="spacingAndGlyphs">NZDUSD,M1</text>
</svg>
</body></html>
